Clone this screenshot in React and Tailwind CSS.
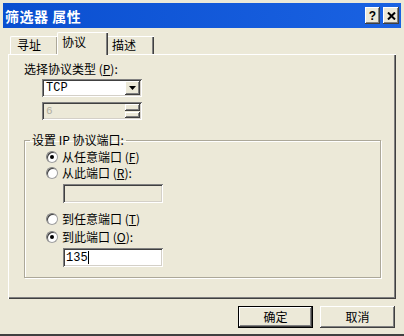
import React from 'react';

const raised = 'shadow-[inset_-1px_-1px_#404040,inset_1px_1px_#ffffff,inset_-2px_-2px_#808080,inset_2px_2px_#ece9d8]';
const sunken = 'shadow-[inset_1px_1px_#808080,inset_-1px_-1px_#ffffff,inset_2px_2px_#404040,inset_-2px_-2px_#d4d0c8]';

const Radio = ({ checked, children }) => (
  <div className="flex items-center h-[16px]">
    <span className="w-[12px] h-[12px] rounded-full bg-white border border-[#a0a0a0] border-t-[#808080] border-l-[#808080] flex items-center justify-center shadow-[inset_1px_1px_#404040]">
      {checked && <span className="w-[4px] h-[4px] rounded-full bg-black" />}
    </span>
    <span className="ml-[4px]">{children}</span>
  </div>
);

const App = () => {
  return (
    <div
      className="w-[404px] h-[336px] bg-[#ece9d8] pt-[3px] px-[3px] flex flex-col text-[12px] text-black overflow-hidden border-b-2 border-[#404040]"
      style={{ fontFamily: '"Noto Sans CJK SC", sans-serif' }}
    >
      {/* title bar */}
      <div className="h-[25px] bg-gradient-to-r from-[#0a4fd0] to-[#1a62e2] flex items-center pl-[2px] pr-[2px] shrink-0">
        <span className="text-white font-bold text-[14px] leading-none tracking-[0.5px]">筛选器 属性</span>
        <div className="ml-auto flex gap-[3px]">
          <div className={`w-[15px] h-[17px] bg-[#ece9d8] flex items-center justify-center font-bold text-[12px] leading-none ${raised}`} style={{ fontFamily: '"Liberation Sans", sans-serif' }}>?</div>
          <div className={`w-[16px] h-[17px] bg-[#ece9d8] flex items-center justify-center ${raised}`}>
            <svg width="9" height="8" viewBox="0 0 9 8"><path d="M1 0.5 L8 7.5 M8 0.5 L1 7.5" stroke="#000" strokeWidth="2" /></svg>
          </div>
        </div>
      </div>

      {/* tabs */}
      <div className="h-[26px] flex items-end pl-[7px] shrink-0">
        <div className="h-[18px] w-[47px] border-t border-l border-white shadow-[inset_-1px_0_#aca899] pl-[6px] leading-[16px] rounded-tl-[2px]">寻址</div>
        <div className="h-[23px] w-[51px] -mb-[1px] relative z-10 bg-[#ece9d8] border-t border-l border-white shadow-[inset_-1px_0_#404040,inset_-2px_0_#808080] pl-[4px] pt-[2px] leading-[14px] rounded-tl-[2px]">协议</div>
        <div className="h-[18px] w-[46px] border-t border-white shadow-[inset_-1px_0_#404040,inset_-2px_0_#808080] pl-[4px] leading-[16px]">描述</div>
      </div>

      {/* panel */}
      <div className="ml-[5px] mr-[5px] h-[245px] shrink-0 border-t border-l border-white shadow-[inset_-1px_-1px_#404040,inset_-2px_-2px_#808080] pl-[15px] pt-[7px]">
        <div className="leading-[14px]">选择协议类型 (<u>P</u>):</div>
        <div className={`mt-[3px] ml-[18px] w-[100px] h-[18px] bg-white ${sunken} flex items-center pl-[4px] pr-[2px]`}>
          <span style={{ fontFamily: '"Liberation Mono", monospace' }} className="text-[12px]">TCP</span>
          <div className={`ml-auto w-[15px] h-[14px] bg-[#ece9d8] ${raised} flex items-center justify-center`}>
            <svg width="7" height="4" viewBox="0 0 7 4"><path d="M0 0 H7 L3.5 4 Z" fill="#000" /></svg>
          </div>
        </div>
        <div className={`mt-[5px] ml-[18px] w-[100px] h-[18px] bg-[#ece9d8] ${sunken} flex items-center pl-[4px] pr-[2px]`}>
          <span className="text-[#b0ad9e] text-[11px]" style={{ fontFamily: '"Liberation Mono", monospace' }}>6</span>
          <div className="ml-auto w-[15px] h-[14px] flex flex-col gap-[1px]">
            <div className={`flex-1 bg-[#ece9d8] ${raised}`} />
            <div className={`flex-1 bg-[#ece9d8] ${raised}`} />
          </div>
        </div>

        <fieldset className="mt-[13px] w-[357px] h-[145px] border border-[#aca899] shadow-[inset_1px_1px_#ffffff,1px_1px_#ffffff] p-0 m-0">
          <legend className="ml-[5px] px-[2px] leading-[14px]">设置 IP 协议端口:</legend>
          <div className="mt-[2px] pl-[21px] flex flex-col">
            <Radio checked>从任意端口 (<u>F</u>)</Radio>
            <Radio>从此端口 (<u>R</u>):</Radio>
            <div className={`mt-[3px] ml-[17px] w-[100px] h-[19px] bg-[#ece9d8] ${sunken}`} />
            <div className="mt-[8px]">
              <Radio>到任意端口 (<u>T</u>)</Radio>
            </div>
            <div className="mt-[2px]">
              <Radio checked>到此端口 (<u>O</u>):</Radio>
            </div>
            <div className={`mt-[3px] ml-[17px] w-[100px] h-[19px] bg-white ${sunken} flex items-center pl-[3px]`}>
              <span style={{ fontFamily: '"Liberation Mono", monospace' }} className="text-[12px] leading-none">135</span>
              <span className="w-[1px] h-[13px] bg-black" />
            </div>
          </div>
        </fieldset>
      </div>

      {/* buttons */}
      <div className="flex justify-end gap-[7px] pr-[6px] pt-[7px]">
        <div className="w-[75px] h-[22px] border border-black flex">
          <div className={`flex-1 bg-[#ece9d8] ${raised} flex items-center justify-center`}>确定</div>
        </div>
        <div className={`w-[75px] h-[22px] bg-[#ece9d8] ${raised} flex items-center justify-center`}>取消</div>
      </div>
    </div>
  );
};

export default App;
